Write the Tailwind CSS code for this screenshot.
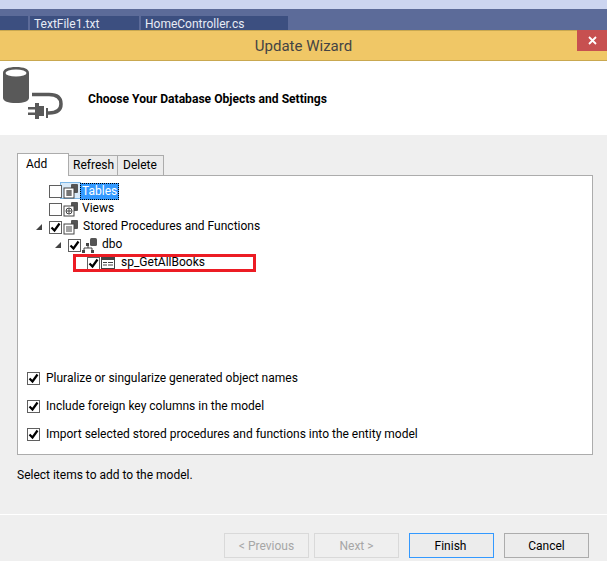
<!DOCTYPE html>
<html><head><meta charset="utf-8"><script src="https://cdn.jsdelivr.net/npm/@tailwindcss/browser@4"></script></head>
<body class="m-0 overflow-hidden">
<div class="relative w-[607px] h-[561px] flex flex-col bg-[#efefef] font-['Roboto',sans-serif] text-[12px] leading-[16px] text-black overflow-hidden">
  <div class="h-[9px] bg-[#ccd5f0]"></div>
  <div class="h-[21px] bg-[#5c6b99] flex items-end gap-[2px] text-[#e8ecf5] overflow-hidden">
    <div class="w-[28px] h-[14px] bg-[#3c4f80]"></div>
    <div class="w-[109px] h-[14px] bg-[#3c4f80] pl-[4px] leading-[12px] pt-[2px]">TextFile1.txt</div>
    <div class="w-[147px] h-[14px] bg-[#3c4f80] pl-[4px] leading-[12px] pt-[2px]">HomeController.cs</div>
  </div>
  <div class="relative h-[31px] bg-[#f0c766] border-y border-[#c9a850] flex items-center justify-center text-[15px] text-[#444]">
    Update Wizard
    <div class="absolute right-0 top-[-1px] w-[30px] h-[21px] bg-[#c75050] flex items-center justify-center">
      <svg width="9" height="9" viewBox="0 0 9 9"><path d="M1 1L8 8M8 1L1 8" stroke="#fff" stroke-width="1.8"/></svg>
    </div>
  </div>
  <div class="h-[74px] bg-white flex items-center relative">
    <svg class="shrink-0 mb-[14px]" width="65" height="60" viewBox="0 0 65 60">
      <path d="M3 12C3 8 8 6 16 6S29 8 29 12V37C29 40 24 42 16 42S3 40 3 37Z" fill="#595959"/>
      <ellipse cx="16" cy="12" rx="10.5" ry="3.6" fill="#fff"/>
      <path d="M32 33.5H49C57 33.5 61 37 61 43C61 49 57 52 49 52H46" fill="none" stroke="#595959" stroke-width="3.5"/>
      <path d="M35 42H39V45H44V55H39V58H35Z" fill="#595959"/>
      <path d="M28 46H35V48.5H28ZM28 51.5H35V54H28Z" fill="#595959"/>
      <path d="M46 47H48V57H46Z" fill="#595959"/>
    </svg>
    <div class="ml-[23px] font-bold text-[12.1px] pt-[2px]">Choose Your Database Objects and Settings</div>
  </div>
  <div class="pl-[17px] pr-[14px] pt-[18px]">
    <div class="flex items-end h-[22px] relative z-10">
      <div class="w-[52px] h-[23px] mb-[-1px] bg-white border border-b-0 border-[#acacac] pl-[8px] pt-[2px]">Add</div>
      <div class="w-[49px] h-[20px] bg-[#ececec] border border-[#acacac] border-b-0 border-l-0 pl-[4px] pt-[1px]">Refresh</div>
      <div class="w-[46px] h-[20px] bg-[#ececec] border border-[#acacac] border-b-0 border-l-0 pl-[5px] pt-[1px]">Delete</div>
    </div>
    <div class="h-[280px] bg-white border border-[#acacac] flex flex-col">
      <div class="h-[196px] pt-[6px] pl-[31px] flex flex-col">
        <div class="h-[18px] flex items-center relative">
          <span class="absolute left-[11px] top-[0px] w-[21px] h-[17px] bg-[#d8eaf9] border border-[#7db8e8]"></span>
          <span class="relative w-[13px] h-[13px] border border-[#5f5f5f] bg-white shrink-0"></span>
          <svg class="relative ml-[1px] shrink-0" width="16" height="16" viewBox="0 0 16 16"><rect x="8" y="1" width="7" height="9" rx="1" fill="#555"/><rect x="1" y="5" width="10" height="10" fill="#fff" stroke="#444"/><path d="M3 8h6M3 10h6M3 12h6M5 7v6M7 7v6" stroke="#444"/></svg>
          <span class="relative ml-[1px] h-[17px] bg-[#3399ff] text-white px-[2px] outline-1 outline-dotted outline-black -outline-offset-1">Tables</span>
        </div>
        <div class="h-[18px] flex items-center">
          <span class="w-[13px] h-[13px] border border-[#5f5f5f] bg-white shrink-0"></span>
          <svg class="ml-[1px] shrink-0" width="16" height="16" viewBox="0 0 16 16"><rect x="8" y="1" width="7" height="9" rx="1" fill="#555"/><rect x="1" y="5" width="10" height="10" fill="#fff" stroke="#444"/><circle cx="6" cy="10" r="3" fill="none" stroke="#444"/><path d="M3 10h6M6 7v6" stroke="#444"/></svg>
          <span class="ml-[3px] pb-[2px]">Views</span>
        </div>
        <div class="h-[18px] flex items-center relative">
          <svg class="absolute left-[-13px] top-[6px]" width="7" height="7" viewBox="0 0 7 7"><path d="M6 0V6H0Z" fill="#444"/></svg>
          <span class="w-[13px] h-[13px] border border-[#5f5f5f] bg-white shrink-0 flex items-center justify-center"><svg width="11" height="11" viewBox="0 0 11 11"><path d="M1.5 5.5L4.5 8.5L9.5 1.5" fill="none" stroke="#000" stroke-width="2.2"/></svg></span>
          <svg class="ml-[1px] shrink-0" width="16" height="16" viewBox="0 0 16 16"><rect x="8" y="1" width="7" height="9" rx="1" fill="#555"/><rect x="1" y="5" width="10" height="10" fill="#fff" stroke="#444"/><path d="M3 8h6M3 10h6M3 12h6" stroke="#444"/></svg>
          <span class="ml-[4px] pb-[2px] whitespace-nowrap">Stored Procedures and Functions</span>
        </div>
        <div class="h-[18px] flex items-center relative ml-[19px]">
          <svg class="absolute left-[-13px] top-[6px]" width="7" height="7" viewBox="0 0 7 7"><path d="M6 0V6H0Z" fill="#444"/></svg>
          <span class="w-[13px] h-[13px] border border-[#5f5f5f] bg-white shrink-0 flex items-center justify-center"><svg width="11" height="11" viewBox="0 0 11 11"><path d="M1.5 5.5L4.5 8.5L9.5 1.5" fill="none" stroke="#000" stroke-width="2.2"/></svg></span>
          <svg class="ml-[1px] shrink-0" width="16" height="16" viewBox="0 0 16 16"><rect x="8" y="1" width="7" height="8" rx="1.5" fill="#555"/><path d="M6 8V11M2 14V11H10V14" fill="none" stroke="#444"/><rect x="4" y="6" width="3" height="3" fill="#444"/><rect x="0" y="13" width="3" height="3" fill="#444"/><rect x="9" y="13" width="3" height="3" fill="#444"/></svg>
          <span class="ml-[4px] pb-[2px]">dbo</span>
        </div>
        <div class="h-[18px] flex items-center relative ml-[38px]">
          <span class="absolute left-[-14px] top-0 w-[183px] h-[18px] border-[3px] border-[#ec1c24]"></span>
          <span class="w-[13px] h-[13px] border border-[#5f5f5f] bg-white shrink-0 flex items-center justify-center"><svg width="11" height="11" viewBox="0 0 11 11"><path d="M1.5 5.5L4.5 8.5L9.5 1.5" fill="none" stroke="#000" stroke-width="2.2"/></svg></span>
          <svg class="ml-[1px] shrink-0" width="14" height="12" viewBox="0 0 14 12"><rect x=".5" y=".5" width="13" height="11" fill="#fff" stroke="#444"/><rect x="0" y="0" width="14" height="3" fill="#444"/><path d="M2 5.5h4M7 5.5h5M2 8h4M7 8h5" stroke="#444"/></svg>
          <span class="ml-[6px] pb-[2px]">sp_GetAllBooks</span>
        </div>
      </div>
      <div class="flex flex-col gap-[15px] pl-[9px]">
        <label class="flex items-center gap-[6px] h-[13px]"><span class="w-[13px] h-[13px] border border-[#5f5f5f] bg-white shrink-0 flex items-center justify-center"><svg width="11" height="11" viewBox="0 0 11 11"><path d="M1.5 5.5L4.5 8.5L9.5 1.5" fill="none" stroke="#000" stroke-width="2.2"/></svg></span><span class="pb-[2px]">Pluralize or singularize generated object names</span></label>
        <label class="flex items-center gap-[6px] h-[13px]"><span class="w-[13px] h-[13px] border border-[#5f5f5f] bg-white shrink-0 flex items-center justify-center"><svg width="11" height="11" viewBox="0 0 11 11"><path d="M1.5 5.5L4.5 8.5L9.5 1.5" fill="none" stroke="#000" stroke-width="2.2"/></svg></span><span class="pb-[2px]">Include foreign key columns in the model</span></label>
        <label class="flex items-center gap-[6px] h-[13px]"><span class="w-[13px] h-[13px] border border-[#5f5f5f] bg-white shrink-0 flex items-center justify-center"><svg width="11" height="11" viewBox="0 0 11 11"><path d="M1.5 5.5L4.5 8.5L9.5 1.5" fill="none" stroke="#000" stroke-width="2.2"/></svg></span><span class="pb-[2px]">Import selected stored procedures and functions into the entity model</span></label>
      </div>
    </div>
    <div class="mt-[12px]">Select items to add to the model.</div>
  </div>
  <div class="absolute left-0 right-0 top-[514px] h-[1px] bg-white"></div>
  <div class="absolute right-[18px] top-[533px] flex">
    <div class="w-[85px] h-[25px] border border-[#d9d9d9] text-[#a6a6a6] flex items-center justify-center">&lt; Previous</div>
    <div class="w-[85px] h-[25px] ml-[5px] border border-[#d9d9d9] text-[#a6a6a6] flex items-center justify-center">Next &gt;</div>
    <div class="w-[85px] h-[25px] ml-[10px] border border-[#3399ff] bg-[#ececec] flex items-center justify-center pr-[2px]">Finish</div>
    <div class="w-[85px] h-[25px] ml-[10px] border border-[#acacac] bg-[#ececec] flex items-center justify-center">Cancel</div>
  </div>
</div>
</body></html>
